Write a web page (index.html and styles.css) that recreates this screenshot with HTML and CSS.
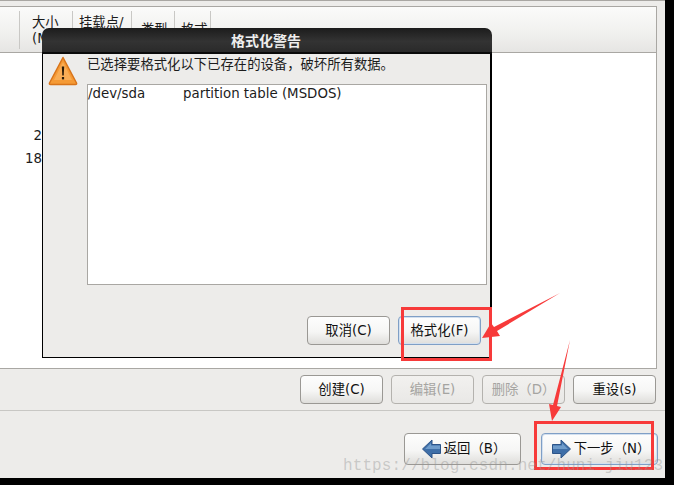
FILE: index.html
```html
<!DOCTYPE html>
<html lang="zh-CN">
<head>
<meta charset="utf-8">
<title>格式化警告</title>
<link rel="stylesheet" href="styles.css">
</head>
<body>
<div class="screen">
  <div class="topline"></div>
  <section class="table">
    <div class="thead">
      <div class="th w1"></div>
      <div class="th w2">大小<br>(MB)</div>
      <div class="th w3">挂载点/<br>RAID/卷</div>
      <div class="th w4 low">类型</div>
      <div class="th w5 low">格式</div>
      <div class="th grow"></div>
    </div>
    <div class="tbody">
      <div class="size">2</div>
      <div class="size">18</div>
    </div>
  </section>
  <div class="actions">
    <button class="btn">创建(C)</button>
    <button class="btn off">编辑(E)</button>
    <button class="btn off">删除（D）</button>
    <button class="btn">重设(s)</button>
  </div>
  <div class="sep"></div>
  <div class="nav">
    <button class="btn big">
      <svg class="ico" width="19" height="20" viewBox="0 0 19 20"><path d="M10 1 L0.5 10 L10 19 V14.5 H18.5 V5.5 H10 Z" fill="#3f6fa8" stroke="#2d5488"/><path d="M9 4 L3 10 H18 V6.5 H9 Z" fill="#6f9ccb"/></svg>
      <span>返回（B）</span>
    </button>
    <button class="btn big focus">
      <svg class="ico" width="19" height="20" viewBox="0 0 19 20"><path d="M9 1 L18.500 10 L9 19 V14.500 H0.500 V5.500 H9 Z" fill="#3f6fa8" stroke="#2d5488"/><path d="M10 4 L16 10 H1 V6.500 H10 Z" fill="#6f9ccb"/></svg>
      <span>下一步（N）</span>
    </button>
  </div>
</div>

<div class="dialog">
  <div class="titlebar">格式化警告</div>
  <div class="dbody">
    <div class="msgrow">
      <svg class="warn" width="30" height="30" viewBox="0 0 30 30"><path d="M15 1.500 L28.500 27 Q29 28.500 27.500 28.500 H2.500 Q1 28.500 1.500 27 Z" fill="#f59a35" stroke="#d8741a" stroke-width="1.500" stroke-linejoin="round"/><path d="M15 6 L24 24 H6 Z" fill="#f9ad55"/><path d="M13.800 10.500 H16.200 L15.700 19.500 H14.300 Z" fill="#2b1c08"/><rect x="13.900" y="21" width="2.200" height="2.400" fill="#2b1c08"/></svg>
      <div class="msgcol">
        <p class="msg">已选择要格式化以下已存在的设备，破坏所有数据。</p>
        <div class="list"><span class="dev">/dev/sda</span><span>partition table (MSDOS)</span></div>
      </div>
    </div>
    <div class="dactions">
      <button class="btn">取消(C)</button>
      <button class="btn focus">格式化(F)</button>
    </div>
  </div>
</div>

<svg class="marks" width="674" height="485" viewBox="0 0 674 485">
  <rect x="402.500" y="308.500" width="88" height="51" fill="none" stroke="#f73a3a" stroke-width="3"/>
  <rect x="535.500" y="422.500" width="117" height="46" fill="none" stroke="#f73a3a" stroke-width="3"/>
  <path d="M560 293 L497 331 L500 336 L482 338 L491 323 L494 327 Z" fill="#f73a3a"/>
  <path d="M570 340 L557 406 L561 407 L552 421 L549 404 L553 405 Z" fill="#f73a3a"/>
</svg>
<div class="wm">https://blog.csdn.net/huni jiu123</div>
</body>
</html>
```
FILE: styles.css
```css
* { box-sizing: border-box; }
html, body { margin: 0; height: 485px; overflow: hidden; background: #000; }
body { position: relative; font: 13.350px/16px "DejaVu Sans", "Noto Sans CJK SC", sans-serif; color: #1c1c1c; }

.screen { width: 665px; height: 478px; background: #edecea; display: flex; flex-direction: column; }
.topline { height: 1px; background: #a9a7a3; margin-bottom: 5px; }

.table { width: 657px; height: 363px; border: 1px solid #a9a7a3; border-left: 0; background: #fff; display: flex; flex-direction: column; flex: none; }
.thead { height: 46px; flex: none; display: flex; border-bottom: 1px solid #a9a7a3; background: linear-gradient(#fbfbfa, #f0f0ee 60%, #e6e5e3); padding-top: 4px; }
.th { height: 38px; border-right: 1px solid #c9c8c5; padding: 4px 0 0 12px; overflow: hidden; white-space: nowrap; }
.w1 { width: 20px; padding: 0; }
.w2 { width: 53px; }
.w3 { width: 59px; padding-left: 6px; }
.w4 { width: 43px; padding-left: 9px; }
.w5 { width: 36px; padding-left: 6px; }
.low { padding-top: 11px; }
.grow { flex: 1; border-right: 0; }
.tbody { padding: 71px 0 0 0; width: 45px; text-align: right; line-height: 23px; }
.size { padding-right: 3px; }

.actions { height: 41px; flex: none; display: flex; justify-content: flex-end; gap: 8px; padding: 6px 0 0 0; width: 656px; }
.sep { height: 1px; flex: none; background: #c8c7c4; }
.nav { flex: 1; display: flex; justify-content: flex-end; gap: 20px; padding: 22px 7px 0 0; }

.btn { width: 83px; height: 29px; padding: 0; border: 1px solid #9a9894; border-radius: 4px; background: linear-gradient(#fdfdfd, #f6f6f5 55%, #dfdedb); font: 13.350px/16px "DejaVu Sans", "Noto Sans CJK SC", sans-serif; color: #111; display: flex; align-items: center; justify-content: center; }
.off { color: #a5a4a1; background: linear-gradient(#f2f1ef, #e9e8e6); border-color: #b4b2ae; }
.focus { border-color: #7f9fc6; box-shadow: inset 0 0 0 1px #d3e0ef; }
.big { width: 117px; height: 32px; gap: 3px; padding-left: 3px; }
.ico { flex: none; }

.dialog { position: absolute; left: 42px; top: 28px; width: 450px; height: 330px; display: flex; flex-direction: column; }
.titlebar { height: 26px; flex: none; border-radius: 7px 7px 0 0; background: linear-gradient(#1c1c1c, #333 55%, #2a2a2a); border-bottom: 2px solid #0a0a0a; color: #eee; font-size: 14px; font-weight: bold; text-align: center; line-height: 26px; padding-right: 2px; }
.dbody { flex: 1; background: #edecea; border: 1px solid #000; border-top: 0; border-right-width: 2px; display: flex; flex-direction: column; }
.msgrow { display: flex; }
.warn { margin: 2px 9px 0 5px; flex: none; }
.msgcol { flex: 1; }
.msg { margin: 0; padding: 3px 0 0 0; height: 30px; line-height: 16px; }
.list { width: 400px; height: 201px; border: 1px solid #a9a7a3; background: #fff; padding: 1px 0 0 0; line-height: 16px; white-space: pre; }
.dev { display: inline-block; width: 95px; }
.dactions { display: flex; justify-content: flex-end; gap: 8px; padding: 31px 9px 0 0; }

.marks { position: absolute; left: 0; top: 0; pointer-events: none; }
.wm { position: absolute; left: 343px; top: 457px; width: 325px; font: 16px/18px "Liberation Mono", monospace; letter-spacing: 0.100px; color: rgba(150,150,150,.42); white-space: nowrap; overflow: hidden; }
```
